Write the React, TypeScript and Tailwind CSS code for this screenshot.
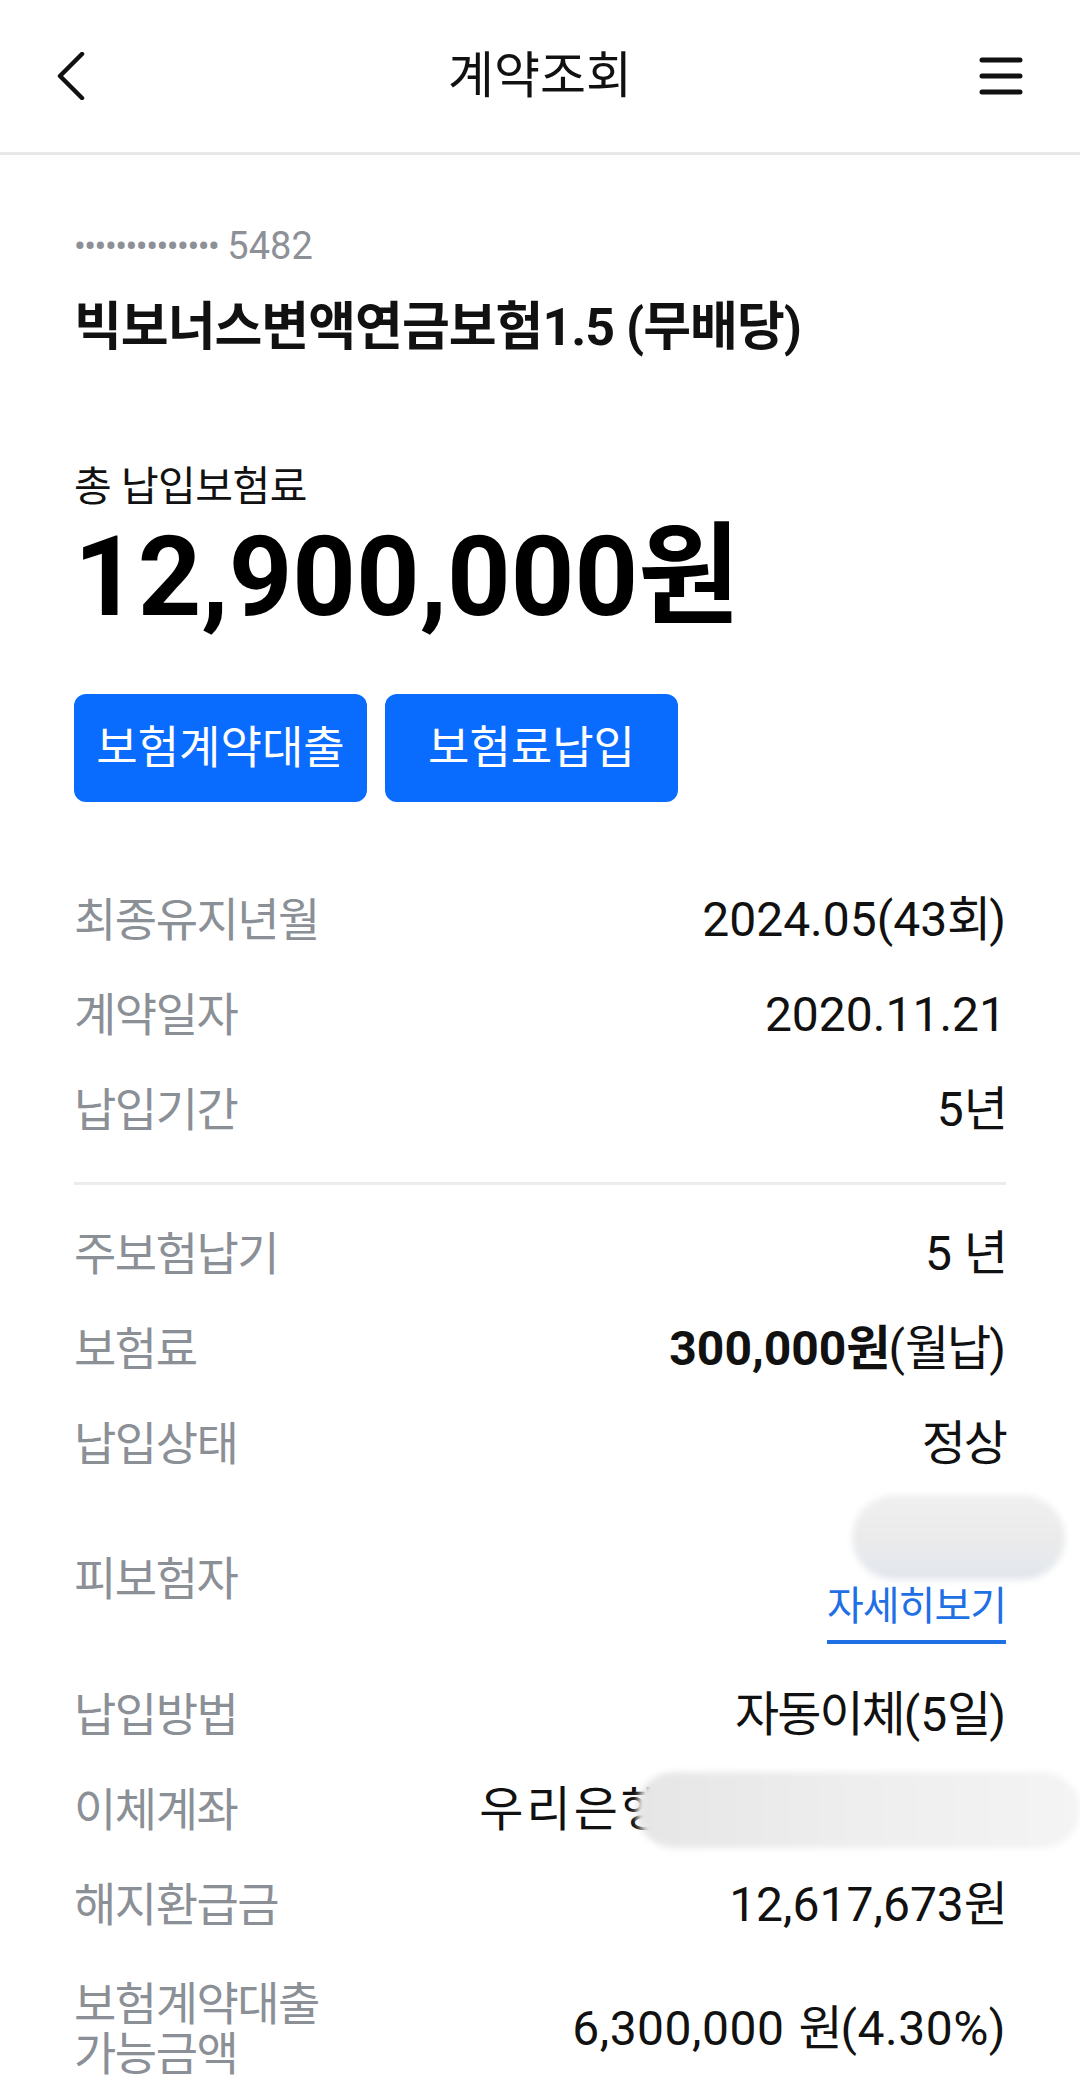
import React from "react";

const FONT = { fontFamily: '"Roboto", "Noto Sans CJK KR", sans-serif' };

const K: React.FC<{ children: React.ReactNode }> = ({ children }) => (
  <span className="tracking-[-2px]">{children}</span>
);

const labelCls = "text-[46px] tracking-[-1.5px] text-[#8b8f96]";

const Row: React.FC<{ label: React.ReactNode; children: React.ReactNode }> = ({
  label,
  children,
}) => (
  <div className="flex items-center justify-between h-[95px]">
    <span className={`${labelCls} leading-none`}>{label}</span>
    <div className="text-[48px] leading-none text-[#111]">{children}</div>
  </div>
);

const App: React.FC = () => {
  return (
    <div className="w-[1080px] min-h-[2098px] bg-white overflow-hidden" style={FONT}>
      {/* Header */}
      <header className="flex items-center justify-between h-[155px] px-[57px] border-b-[3px] border-[#e8e8e8]">
        <div className="w-[48px]">
          <svg width="28" height="48" viewBox="0 0 28 48" fill="none">
            <path
              d="M25 2 L3 24 L25 46"
              stroke="#111"
              strokeWidth="4.5"
              strokeLinecap="round"
              strokeLinejoin="round"
            />
          </svg>
        </div>
        <h1 className="text-[50px] leading-none text-[#111]">계약조회</h1>
        <div className="w-[48px] flex justify-end">
          <svg width="44" height="40" viewBox="0 0 44 40" fill="none">
            <path
              d="M3 4 H41 M3 20 H41 M3 36 H41"
              stroke="#111"
              strokeWidth="5"
              strokeLinecap="round"
            />
          </svg>
        </div>
      </header>

      <main className="px-[74px]">
        {/* Contract number + product */}
        <div className="mt-[71px] h-[40px] flex items-center text-[38px] leading-none text-[#8e9097]">
          <span className="text-[35px] tracking-[-1.5px]">••••••••••••••</span>
          <span className="ml-[9px]">5482</span>
        </div>
        <div className="mt-[32px] h-[60px] flex items-center">
          <h2 className="text-[52px] leading-none font-bold tracking-[-1px] text-[#111]">
            빅보너스변액연금보험1.5 (무배당)
          </h2>
        </div>

        {/* Total paid */}
        <div className="mt-[106px] h-[46px] flex items-center text-[41px] leading-none tracking-[-0.5px] text-[#111]">
          총 납입보험료
        </div>
        <div className="mt-[17px] h-[100px] flex items-center text-[111px] leading-none font-bold text-black">
          12,900,000원
        </div>

        {/* Buttons */}
        <div className="mt-[67px] flex gap-[18px]">
          <button className="w-[293px] h-[108px] rounded-[12px] bg-[#0a6cff] text-white text-[45px] leading-none">
            보험계약대출
          </button>
          <button className="w-[293px] h-[108px] rounded-[12px] bg-[#0a6cff] text-white text-[45px] leading-none">
            보험료납입
          </button>
        </div>

        {/* Details */}
        <div className="mt-[70px]">
          <Row label="최종유지년월">
            2024.05(43<K>회</K>)
          </Row>
          <Row label="계약일자">2020.11.21</Row>
          <Row label="납입기간">
            5<K>년</K>
          </Row>
        </div>

        <div className="mt-[25px] mb-[21px] h-[3px] bg-[#ececec]" />

        <div>
          <Row label="주보험납기">
            5 <K>년</K>
          </Row>
          <Row label="보험료">
            <span className="font-bold">
              300,000<K>원</K>
            </span>
            (<K>월납</K>)
          </Row>
          <Row label="납입상태">
            <K>정상</K>
          </Row>

          <div className="flex items-center justify-between h-[176px]">
            <span className={`${labelCls} leading-none`}>피보험자</span>
            <div className="flex flex-col items-end self-start pt-[4px]">
              <div className="w-[213px] h-[85px] mr-[-59px] rounded-full bg-gradient-to-b from-[#f0f0f0] via-[#ebebeb] to-[#e2e7ee] blur-[3px]" />
              <a className="mt-[6px] pb-[12px] border-b-4 border-[#1f6fe5] text-[40px] leading-[42px] tracking-[-1px] text-[#1f6fe5]">
                자세히보기
              </a>
            </div>
          </div>

          <Row label="납입방법">
            <K>자동이체</K>(5<K>일</K>)
          </Row>
          <div className="flex items-center justify-between h-[95px]">
            <span className={`${labelCls} leading-none`}>이체계좌</span>
            <div className="flex items-center">
              <span className="text-[48px] leading-none tracking-[3px] text-[#111]">우리은행</span>
              <div className="relative w-[444px] h-[76px] ml-[-32px] mr-[-74px] rounded-full bg-gradient-to-r from-[#e6e6e6] via-[#eeeeee] to-[#f4f4f4] blur-[3px]" />
            </div>
          </div>
          <Row label="해지환급금">
            12,617,673<K>원</K>
          </Row>
          <div className="flex items-center justify-between h-[154px]">
            <div className="flex flex-col">
              <span className={`${labelCls} h-[50px] leading-[50px]`}>보험계약대출</span>
              <span className={`${labelCls} h-[50px] leading-[50px]`}>가능금액</span>
            </div>
            <div className="text-[48px] leading-none text-[#111] tracking-[0.5px]">
              6,300,000<span className="ml-[14px]"><K>원</K></span>(4.30%)
            </div>
          </div>
        </div>
      </main>
    </div>
  );
};

export default App;
